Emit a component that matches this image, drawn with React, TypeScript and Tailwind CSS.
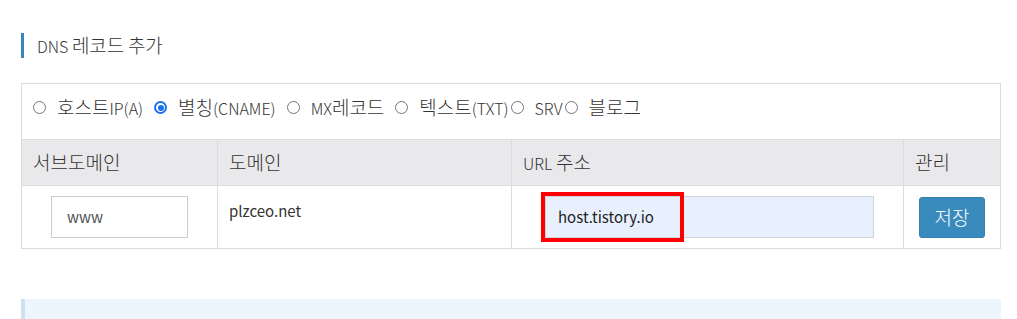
const font = { fontFamily: '"Noto Sans CJK KR", "Noto Sans", sans-serif' }

// 한글은 크게, 영문은 작게 (참조 화면의 웹폰트 비율 맞춤)
function Mixed({ text, ko = 'text-[19px] font-light', en = 'text-[16px] font-light' }: { text: string; ko?: string; en?: string }) {
  const parts = text.split(/([가-힣]+)/).filter(Boolean)
  return (
    <span>
      {parts.map((p, i) => (
        <span key={i} className={/[가-힣]/.test(p) ? ko : en}>
          {p}
        </span>
      ))}
    </span>
  )
}

type RadioOption = { label: string; checked?: boolean; gap?: boolean }

const options: RadioOption[] = [
  { label: '호스트IP(A)', gap: true },
  { label: '별칭(CNAME)', checked: true, gap: true },
  { label: 'MX레코드', gap: true },
  { label: '텍스트(TXT)' },
  { label: 'SRV' },
  { label: '블로그' },
]

function Radio({ checked }: { checked?: boolean }) {
  return (
    <span
      className={`inline-flex items-center justify-center w-[13px] h-[13px] rounded-full ${
        checked ? 'border-2 border-[#1a73e8]' : 'border border-[#767676]'
      } bg-white`}
    >
      {checked && <span className="w-[6px] h-[6px] rounded-full bg-[#1a73e8]" />}
    </span>
  )
}

export default function App() {
  return (
    <div className="bg-white w-[1017px] h-[319px] overflow-hidden text-[#333]" style={font}>
      {/* 제목 */}
      <div className="pt-[33px] pl-[21px]">
        <div className="flex items-center h-[25px] border-l-[3px] border-[#3a86b8] pl-[13px]">
          <Mixed text="DNS 레코드 추가" />
        </div>
      </div>

      <div className="ml-[21px] mt-[25px] w-[980px] border border-[#dcdcdc]">
        {/* 레코드 종류 */}
        <div className="h-[56px] flex items-center pl-[11px] pb-[8px] border-b border-[#dcdcdc]">
          {options.map((o) => (
            <label key={o.label} className={`flex items-center ${o.gap ? 'mr-[11px]' : 'mr-[2px]'}`}>
              <Radio checked={o.checked} />
              <span className="ml-[11px]">
                <Mixed text={o.label} />
              </span>
            </label>
          ))}
        </div>

        {/* 헤더 */}
        <div className="flex h-[46px] bg-[#e9e9ec] border-b border-[#dcdcdc]">
          <div className="w-[196px] pl-[11px] flex items-center border-r border-[#dcdcdc]">
            <Mixed text="서브도메인" />
          </div>
          <div className="w-[294px] pl-[11px] flex items-center border-r border-[#dcdcdc]">
            <Mixed text="도메인" />
          </div>
          <div className="w-[392px] pl-[11px] flex items-center border-r border-[#dcdcdc]">
            <Mixed text="URL 주소" />
          </div>
          <div className="flex-1 pl-[11px] flex items-center">
            <Mixed text="관리" />
          </div>
        </div>

        {/* 입력 */}
        <div className="flex h-[62px]">
          <div className="w-[196px] flex items-center justify-center border-r border-[#dcdcdc]">
            <div className="w-[137px] h-[42px] border border-[#cccccc] flex items-center pl-[15px] text-[15px] text-[#555]">
              www
            </div>
          </div>
          <div className="w-[294px] pl-[11px] pt-[14px] border-r border-[#dcdcdc] text-[15px]">plzceo.net</div>
          <div className="w-[392px] flex items-center pl-[33px] border-r border-[#dcdcdc]">
            <div className="relative w-[329px] h-[42px] bg-[#e8f0fe] border border-[#cfd4dc] flex items-center pl-[12px] text-[15px] text-[#222]">
              host.tistory.io
              <div className="absolute left-[-5px] top-[-5px] w-[143px] h-[50px] border-4 border-[#ff0000]" />
            </div>
          </div>
          <div className="flex-1 flex items-center justify-center">
            <button className="w-[66px] h-[41px] rounded-[3px] bg-[#3a8bbd] text-white text-[19px] font-light border border-[#347fae]">
              저장
            </button>
          </div>
        </div>
      </div>

      {/* 안내 박스 */}
      <div className="ml-[21px] mt-[50px] w-[980px] h-[40px] bg-[#eef6fd] border-l-[4px] border-[#cde1ef]" />
    </div>
  )
}
